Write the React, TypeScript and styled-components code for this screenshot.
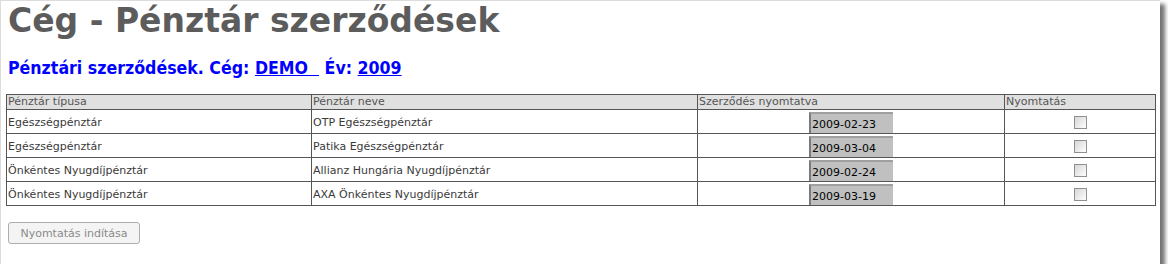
import React from 'react'
import styled, { createGlobalStyle } from 'styled-components'

const GlobalStyle = createGlobalStyle`
  html, body {
    margin: 0;
    padding: 0;
    background: #fff;
  }
`

type Row = {
  type: string,
  name: string,
  date: string
}

const rows: Row[] = [
  { type: 'Egészségpénztár', name: 'OTP Egészségpénztár', date: '2009-02-23' },
  { type: 'Egészségpénztár', name: 'Patika Egészségpénztár', date: '2009-03-04' },
  { type: 'Önkéntes Nyugdíjpénztár', name: 'Allianz Hungária Nyugdíjpénztár', date: '2009-02-24' },
  { type: 'Önkéntes Nyugdíjpénztár', name: 'AXA Önkéntes Nyugdíjpénztár', date: '2009-03-19' },
]

export default function App() {
  return (
    <>
      <GlobalStyle />
      <Frame>
        <Title>Cég - Pénztár szerződések</Title>
        <SubTitle>
          Pénztári szerződések. Cég: <Link href='#'>DEMO&nbsp;&nbsp;</Link> Év: <Link href='#'>2009</Link>
        </SubTitle>
        <Table>
          <colgroup>
            <col style={{ width: 305 }} />
            <col style={{ width: 386 }} />
            <col style={{ width: 307 }} />
            <col />
          </colgroup>
          <thead>
            <tr>
              <Th>Pénztár típusa</Th>
              <Th>Pénztár neve</Th>
              <Th>Szerződés nyomtatva</Th>
              <Th>Nyomtatás</Th>
            </tr>
          </thead>
          <tbody>
            {rows.map((r, i) => (
              <tr key={i}>
                <Td>{r.type}</Td>
                <Td>{r.name}</Td>
                <Td $center>
                  <DateBox readOnly value={r.date} />
                </Td>
                <Td $center>
                  <Check />
                </Td>
              </tr>
            ))}
          </tbody>
        </Table>
        <PrintButton disabled>Nyomtatás indítása</PrintButton>
      </Frame>
    </>
  )
}

const Frame = styled.div`
  box-sizing: border-box;
  width: 1160px;
  height: 264px;
  background: #fff;
  border-top: 1px solid #dcdcdc;
  border-left: 1px solid #dcdcdc;
  box-shadow: 5px 4px 4px rgba(0, 0, 0, 0.55);
  padding: 0 12px 0 5px;
  font-family: 'DejaVu Sans', Verdana, sans-serif;
`

const Title = styled.h1`
  margin: 0;
  padding: 1px 0 0 2px;
  font-size: 33px;
  line-height: 37px;
  font-weight: bold;
  color: #5c5c5c;
`

const SubTitle = styled.h2`
  margin: 18px 0 0 2px;
  font-family: 'DejaVu Sans Condensed', 'DejaVu Sans', Verdana, sans-serif;
  font-stretch: condensed;
  font-size: 17.6px;
  line-height: 22px;
  font-weight: bold;
  color: #0000ff;
`

const Link = styled.a`
  color: #0000ff;
  text-decoration: underline;
`

const Table = styled.table`
  margin-top: 15px;
  width: 1150px;
  border-collapse: collapse;
  table-layout: fixed;
  font-size: 11px;
  color: #3a3a3a;
`

const Th = styled.th`
  border: 1px solid #555;
  background: #e0e0e0;
  color: #555;
  font-weight: normal;
  text-align: left;
  padding: 0 1px;
  height: 14px;
  line-height: 14px;
`

const Td = styled.td<{ $center?: boolean }>`
  border: 1px solid #555;
  padding: 1px 1px 0;
  height: 22px;
  text-align: ${p => (p.$center ? 'center' : 'left')};
  vertical-align: middle;
`

const DateBox = styled.input`
  box-sizing: border-box;
  display: block;
  margin: 0 auto;
  width: 84px;
  height: 21px;
  padding: 2px 0 0 1px;
  background: #c0c0c0;
  border: none;
  border-left: 2px solid #7a7a7a;
  border-top: 2px solid #a0a0a0;
  font-family: 'DejaVu Sans', Verdana, sans-serif;
  font-size: 11px;
  color: #000;
  outline: none;
`

const Check = styled.span`
  display: inline-block;
  box-sizing: border-box;
  width: 13px;
  height: 13px;
  vertical-align: middle;
  border: 1px solid #8f8f8f;
  background: linear-gradient(135deg, #d6d6d6 0%, #f2f2f2 70%, #fff 100%);
`

const PrintButton = styled.button`
  display: block;
  margin: 16px 0 0 2px;
  box-sizing: border-box;
  width: 132px;
  height: 22px;
  padding: 0;
  background: #f4f4f4;
  border: 1px solid #adadad;
  border-radius: 3px;
  color: #8a8a8a;
  font-family: 'DejaVu Sans', Verdana, sans-serif;
  font-size: 11px;
`
